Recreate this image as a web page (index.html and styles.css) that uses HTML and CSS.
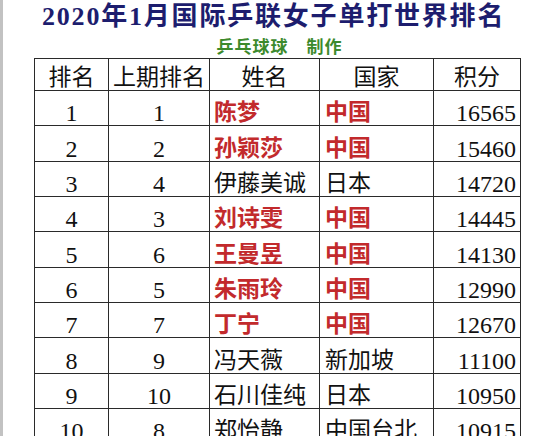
FILE: index.html
```html
<!DOCTYPE html>
<html lang="zh-CN">
<head>
<meta charset="utf-8">
<title>2020年1月国际乒联女子单打世界排名</title>
<link rel="stylesheet" href="styles.css">
</head>
<body>
<div class="page">
  <h1 class="title">2020年1月国际乒联女子单打世界排名</h1>
  <div class="credit">乒乓球球　制作</div>
  <table class="rank">
    <colgroup>
      <col class="c-rank">
      <col class="c-prev">
      <col class="c-name">
      <col class="c-country">
      <col class="c-points">
    </colgroup>
    <thead>
      <tr><th>排名</th><th>上期排名</th><th>姓名</th><th>国家</th><th>积分</th></tr>
    </thead>
    <tbody>
      <tr><td class="num">1</td><td class="num">1</td><td class="name cn">陈梦</td><td class="country cn">中国</td><td class="pts">16565</td></tr>
      <tr><td class="num">2</td><td class="num">2</td><td class="name cn">孙颖莎</td><td class="country cn">中国</td><td class="pts">15460</td></tr>
      <tr><td class="num">3</td><td class="num">4</td><td class="name">伊藤美诚</td><td class="country">日本</td><td class="pts">14720</td></tr>
      <tr><td class="num">4</td><td class="num">3</td><td class="name cn">刘诗雯</td><td class="country cn">中国</td><td class="pts">14445</td></tr>
      <tr><td class="num">5</td><td class="num">6</td><td class="name cn">王曼昱</td><td class="country cn">中国</td><td class="pts">14130</td></tr>
      <tr><td class="num">6</td><td class="num">5</td><td class="name cn">朱雨玲</td><td class="country cn">中国</td><td class="pts">12990</td></tr>
      <tr><td class="num">7</td><td class="num">7</td><td class="name cn">丁宁</td><td class="country cn">中国</td><td class="pts">12670</td></tr>
      <tr><td class="num">8</td><td class="num">9</td><td class="name">冯天薇</td><td class="country">新加坡</td><td class="pts">11100</td></tr>
      <tr><td class="num">9</td><td class="num">10</td><td class="name">石川佳纯</td><td class="country">日本</td><td class="pts">10950</td></tr>
      <tr><td class="num">10</td><td class="num">8</td><td class="name">郑怡静</td><td class="country">中国台北</td><td class="pts">10915</td></tr>
    </tbody>
  </table>
</div>
</body>
</html>
```
FILE: styles.css
```css
html, body {
  margin: 0;
  padding: 0;
  background: #ffffff;
}
body {
  border-left: 3px solid #c2c2c2;
  min-height: 436px;
  overflow: hidden;
}
.page {
  padding-left: 31px;
}
.title {
  margin: 0;
  padding: 2px 0 0 8px;
  height: 34px;
  overflow: visible;
  font-family: "Liberation Serif", "Noto Sans CJK SC", serif;
  font-size: 26px;
  font-weight: bold;
  letter-spacing: 1.8px;
  line-height: 30px;
  color: #1d1d6e;
  white-space: nowrap;
}
.credit {
  margin: 0 0 2px -31px;
  height: 20px;
  text-align: center;
  font-family: "Noto Sans CJK SC", sans-serif;
  font-size: 17px;
  font-weight: bold;
  letter-spacing: 1px;
  line-height: 20px;
  color: #3c8a2c;
}
.rank {
  border-collapse: collapse;
  table-layout: fixed;
  width: 486px;
  font-family: "Liberation Serif", "Noto Sans CJK SC", serif;
  color: #111111;
}
.c-rank { width: 74px; }
.c-prev { width: 101px; }
.c-name { width: 110px; }
.c-country { width: 114px; }
.c-points { width: 87px; }
.rank th,
.rank td {
  border: 1px solid #2a2a2a;
  padding: 0 0 2px 0;
  vertical-align: bottom;
  line-height: 20px;
  white-space: nowrap;
  overflow: hidden;
}
.rank th {
  height: 29px;
  font-size: 23px;
  font-weight: normal;
  text-align: center;
}
.rank td {
  height: 32.35px;
  font-size: 24px;
}
.rank td.num {
  text-align: center;
}
.rank td.name,
.rank td.country {
  font-size: 23px;
  text-align: left;
  padding-left: 4px;
}
.rank td.country {
  padding-left: 5px;
}
.rank td.cn {
  color: #c22a2c;
  font-weight: bold;
}
.rank td.pts {
  text-align: right;
  padding-right: 4px;
}
```
